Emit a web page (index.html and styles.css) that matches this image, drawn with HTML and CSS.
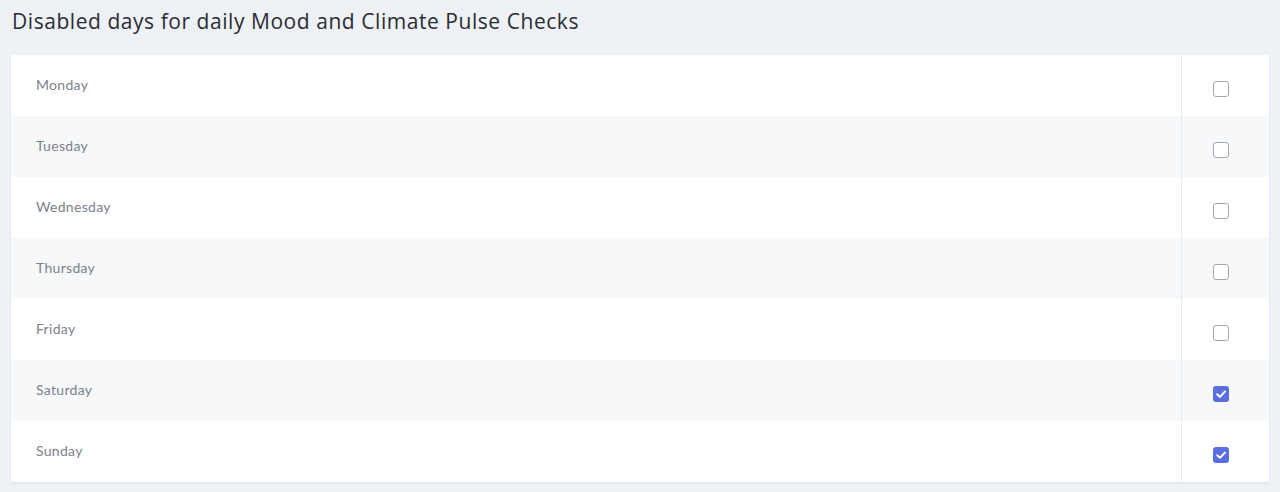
FILE: index.html
```html
<!DOCTYPE html>
<html>
<head>
<meta charset="utf-8">
<link rel="stylesheet" href="styles.css">
</head>
<body>
<div class="page">
  <h1 class="title">Disabled days for daily Mood and Climate Pulse Checks</h1>
  <div class="card">
    <div class="row"><div class="day">Monday</div><div class="check"><span class="box"></span></div></div>
    <div class="row alt"><div class="day">Tuesday</div><div class="check"><span class="box"></span></div></div>
    <div class="row"><div class="day">Wednesday</div><div class="check"><span class="box"></span></div></div>
    <div class="row alt"><div class="day">Thursday</div><div class="check"><span class="box"></span></div></div>
    <div class="row"><div class="day">Friday</div><div class="check"><span class="box"></span></div></div>
    <div class="row alt"><div class="day">Saturday</div><div class="check"><span class="box on"><svg viewBox="0 0 16 16" width="16" height="16"><path d="M4.2 8.3 L6.9 10.9 L11.9 5.6" fill="none" stroke="#fff" stroke-width="2" stroke-linecap="round" stroke-linejoin="round"/></svg></span></div></div>
    <div class="row"><div class="day">Sunday</div><div class="check"><span class="box on"><svg viewBox="0 0 16 16" width="16" height="16"><path d="M4.2 8.3 L6.9 10.9 L11.9 5.6" fill="none" stroke="#fff" stroke-width="2" stroke-linecap="round" stroke-linejoin="round"/></svg></span></div></div>
  </div>
</div>
</body>
</html>
```
FILE: styles.css
```css
* { box-sizing: border-box; }
html, body { margin: 0; padding: 0; }
body {
  background: #eef1f6;
  font-family: "Lato", "Noto Sans", sans-serif;
  width: 1280px;
  height: 492px;
  overflow: hidden;
}
.page {
  padding: 7px 11px 0 11px;
}
.title {
  margin: 0 0 0 1px;
  font-family: "Open Sans", "Noto Sans", sans-serif;
  font-size: 21px;
  letter-spacing: 0.55px;
  font-weight: 400;
  color: #2a2d33;
  line-height: 29px;
  height: 48px;
}
.card {
  background: #fff;
  box-shadow: 0 1px 2px rgba(30, 40, 70, 0.08);
}
.row {
  display: flex;
  height: 61px;
  background: #fff;
}
.row.alt { background: #f7f8fa; }
.day {
  flex: 1;
  padding-left: 25px;
  padding-top: 21px;
  font-size: 14px;
  letter-spacing: 0.3px;
  color: #7c818d;
}
.check {
  width: 88px;
  border-left: 1px solid #e6e9ee;
  display: flex;
  justify-content: center;
  padding-top: 26px;
  padding-right: 9px;
}
.box {
  display: block;
  width: 16px;
  height: 16px;
  border: 1.5px solid #a3a7ae;
  border-radius: 3px;
  background: #fff;
}
.box.on {
  border: none;
  background: #5b6ee1;
}
.box svg { display: block; }
```
